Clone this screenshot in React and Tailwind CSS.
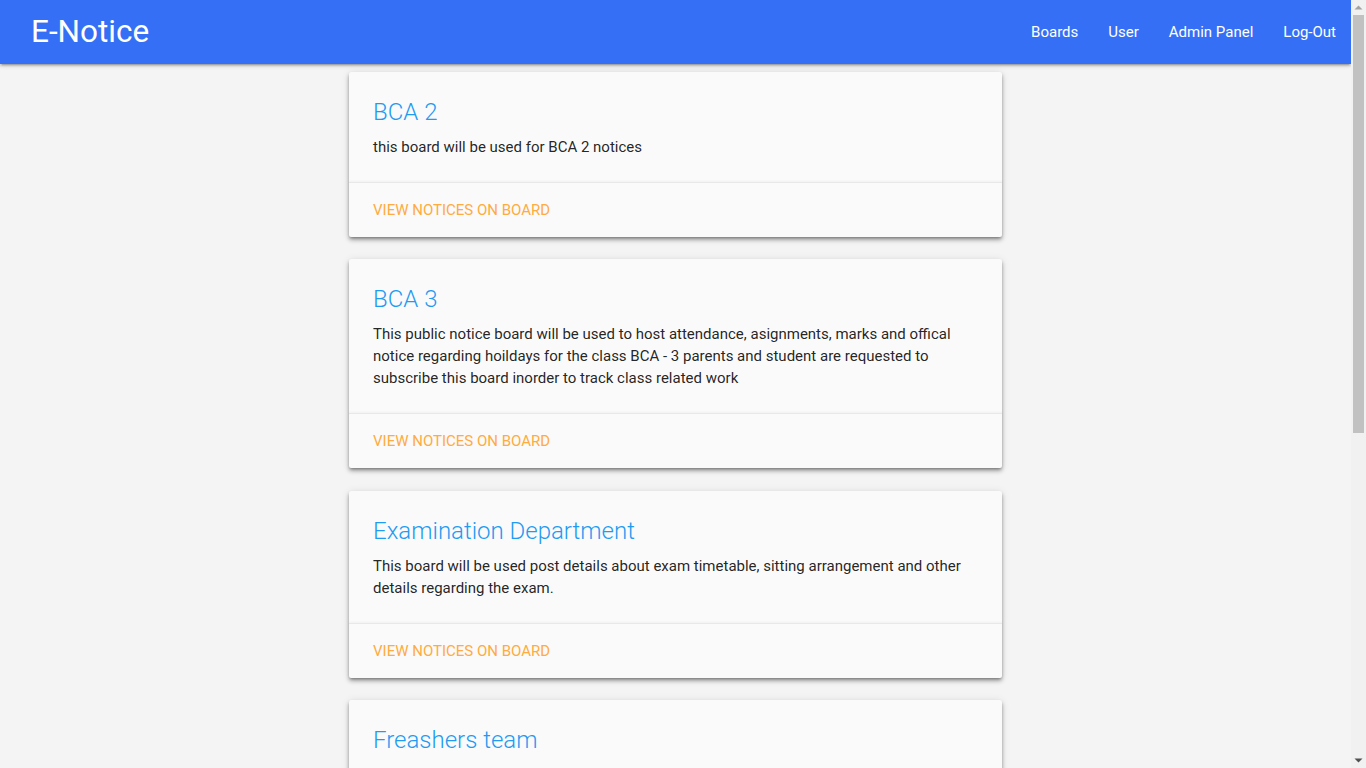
import React from "react";

const boards = [
    {
        title: "BCA 2",
        text: "this board will be used for BCA 2 notices",
    },
    {
        title: "BCA 3",
        text: "This public notice board will be used to host attendance, asignments, marks and offical notice regarding hoildays for the class BCA - 3 parents and student are requested to subscribe this board inorder to track class related work",
    },
    {
        title: "Examination Department",
        text: "This board will be used post details about exam timetable, sitting arrangement and other details regarding the exam.",
    },
    {
        title: "Freashers team",
        text: "This board will be used by the freshers team to share event updates and schedules.",
    },
];

const links = ["Boards", "User", "Admin Panel", "Log-Out"];

const Card = ({title, text}) => (
    <div className="bg-[#fafafa] rounded-[2px] mt-[7.5px] mb-[15px] shadow-[0_3px_4px_0_rgba(0,0,0,0.28),0_1px_8px_0_rgba(0,0,0,0.1),0_2px_3px_-1px_rgba(0,0,0,0.3)]">
        <div className="p-6">
            <span className="block text-[24px] font-light leading-[32px] mb-2 text-[#1f9bf2]">{title}</span>
            <p className="text-[15px] leading-[22px] text-[rgba(0,0,0,0.87)]">{text}</p>
        </div>
        <div className="border-t border-[rgba(160,160,160,0.2)] px-6 py-4 shadow-[0_-1px_2px_rgba(0,0,0,0.04)]">
            <a href="#" className="block text-[15px] leading-[22px] uppercase text-[#ffab40]">View notices on board</a>
        </div>
    </div>
);

// fake classic scrollbar, the reference shows one at the right edge
const Scrollbar = () => (
    <div className="w-[15px] shrink-0 h-screen bg-[#f1f1f1] flex flex-col items-center">
        <svg width="15" height="15" viewBox="0 0 15 15" className="shrink-0">
            <path d="M3.5 9.5 L7.5 5.5 L11.5 9.5 Z" fill="#a3a3a3"/>
        </svg>
        <div className="w-[11px] h-[418px] bg-[#c1c1c1]"></div>
        <div className="flex-1"></div>
        <svg width="15" height="15" viewBox="0 0 15 15" className="shrink-0">
            <path d="M3.5 5.5 L11.5 5.5 L7.5 9.5 Z" fill="#505050"/>
        </svg>
    </div>
);

export default function App() {
    return (
        <div className="h-screen flex overflow-hidden bg-[#f4f4f4] font-['Roboto',sans-serif]">
            <div className="flex-1 min-w-0 h-screen overflow-hidden">
                <nav className="h-16 bg-[#356ff6] flex items-center justify-between shadow-[0_2px_2px_0_rgba(0,0,0,0.14),0_3px_1px_-2px_rgba(0,0,0,0.12),0_1px_5px_0_rgba(0,0,0,0.2)] relative z-10">
                    <a href="#" className="text-white text-[31.5px] leading-[64px] pl-[31px]">E-Notice</a>
                    <ul className="flex">
                        {links.map((l) => (
                            <li key={l}>
                                <a href="#" className="block px-[15px] text-white text-[15px] leading-[64px]">{l}</a>
                            </li>
                        ))}
                    </ul>
                </nav>
                <div className="w-[653px] mx-auto flex flex-col">
                    {boards.map((b) => (
                        <Card key={b.title} {...b}/>
                    ))}
                </div>
            </div>
            <Scrollbar/>
        </div>
    );
}
